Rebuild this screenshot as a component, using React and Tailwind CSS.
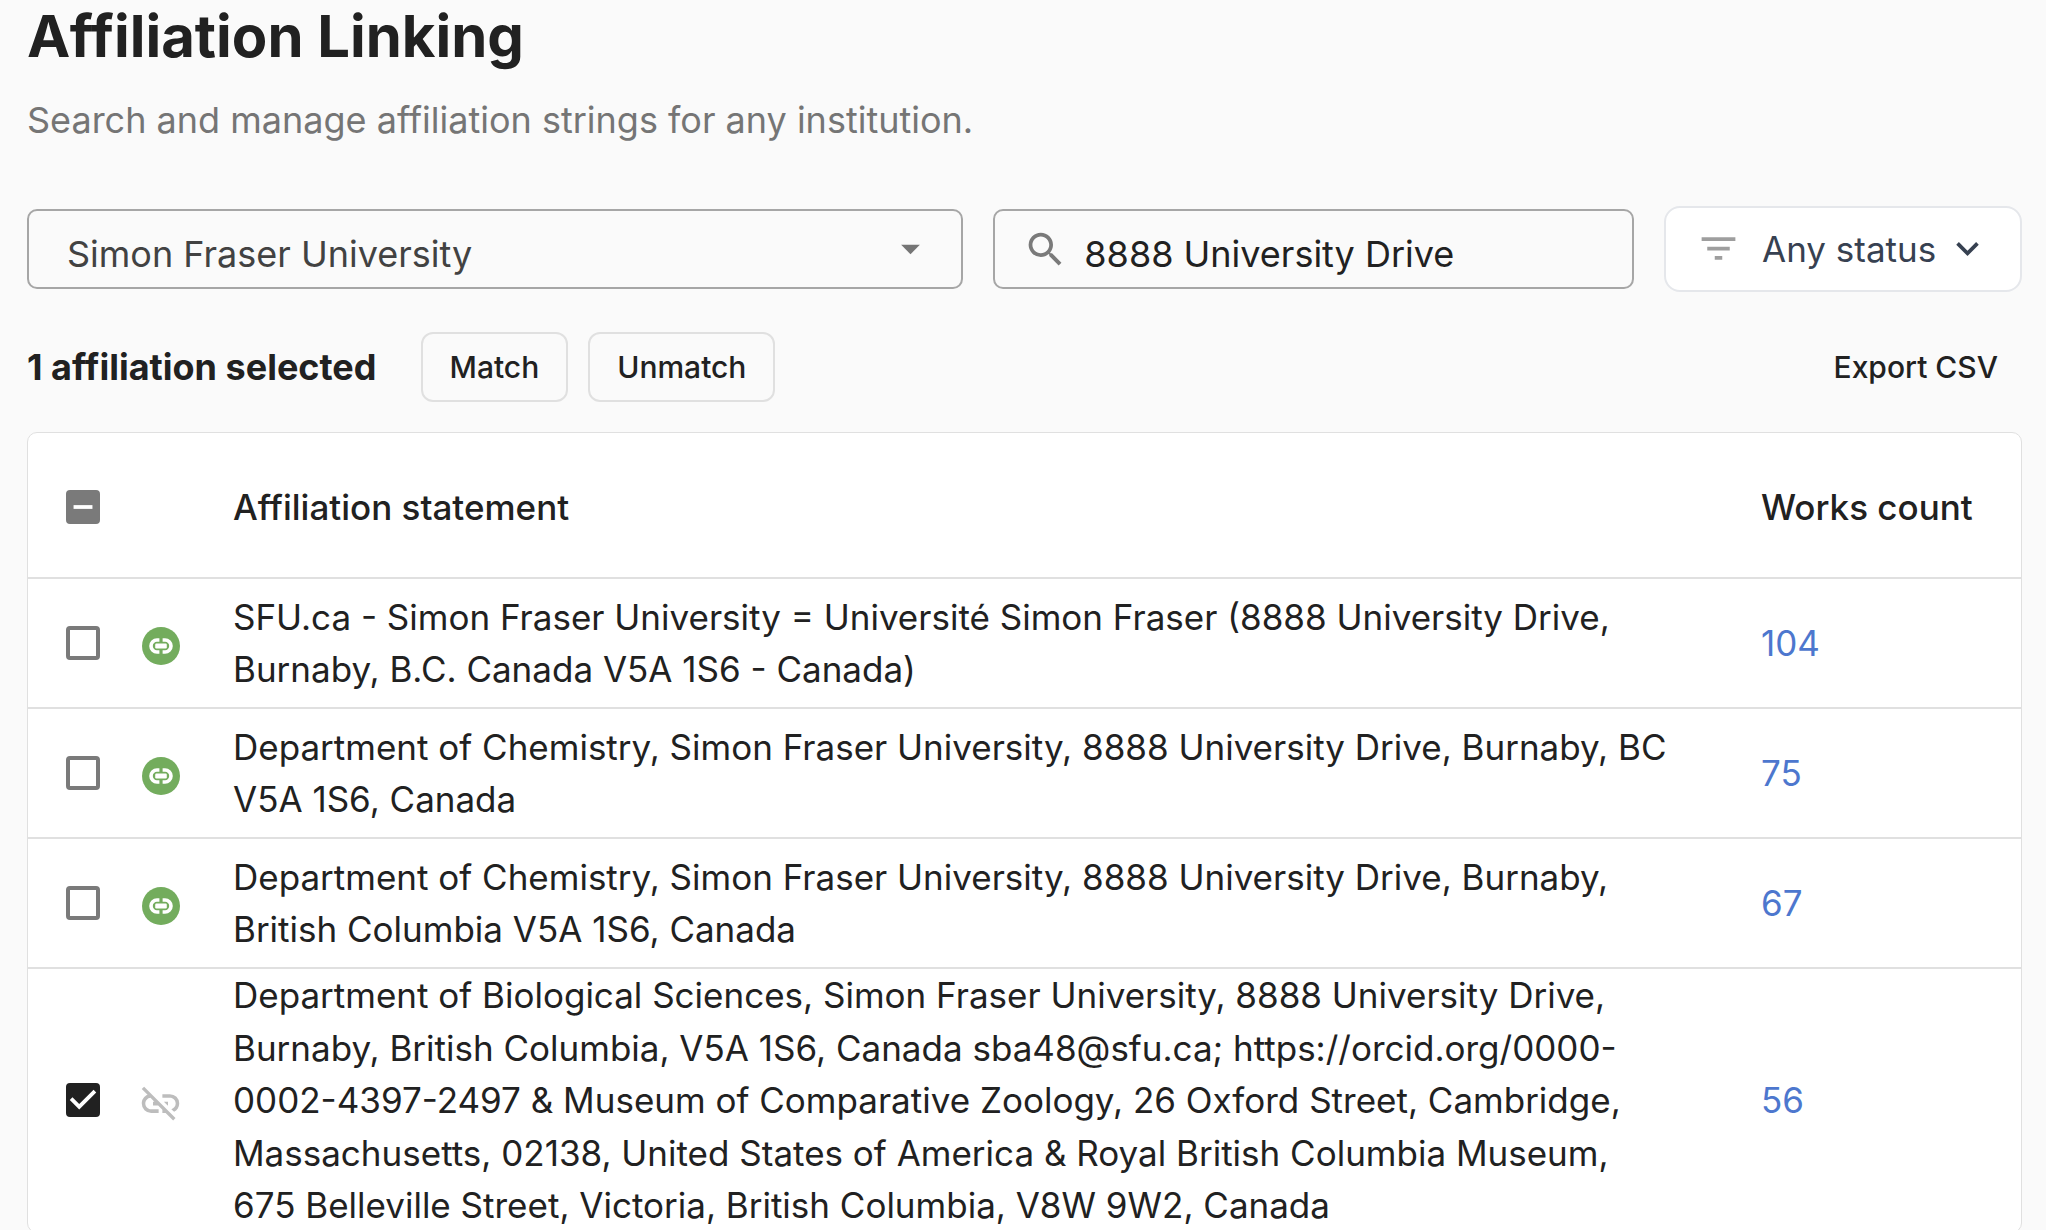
import { useEffect, useRef, useState } from 'react';

const ROWS = [
  {
    id: 1,
    linked: true,
    count: 104,
    text: 'SFU.ca - Simon Fraser University = Université Simon Fraser (8888 University Drive, Burnaby, B.C. Canada V5A 1S6 - Canada)',
  },
  {
    id: 2,
    linked: true,
    count: 75,
    text: 'Department of Chemistry, Simon Fraser University, 8888 University Drive, Burnaby, BC V5A 1S6, Canada',
  },
  {
    id: 3,
    linked: true,
    count: 67,
    text: 'Department of Chemistry, Simon Fraser University, 8888 University Drive, Burnaby, British Columbia V5A 1S6, Canada',
  },
  {
    id: 4,
    linked: false,
    count: 56,
    text: 'Department of Biological Sciences, Simon Fraser University, 8888 University Drive, Burnaby, British Columbia, V5A 1S6, Canada sba48@sfu.ca; https://orcid.org/0000-0002-4397-2497 & Museum of Comparative Zoology, 26 Oxford Street, Cambridge, Massachusetts, 02138, United States of America & Royal British Columbia Museum, 675 Belleville Street, Victoria, British Columbia, V8W 9W2, Canada',
  },
];

const ICONS = {
  menuDown: 'M7,10L12,15L17,10H7Z',
  chevronDown: 'M7.41,8.58L12,13.17L16.59,8.58L18,10L12,16L6,10L7.41,8.58Z',
  filter: 'M6,13H18V11H6M3,6V8H21V6M10,18H14V16H10V18Z',
  magnify:
    'M9.5,3A6.5,6.5 0 0,1 16,9.5C16,11.11 15.41,12.59 14.44,13.73L14.71,14H15.5L20.5,19L19,20.5L14,15.5V14.71L13.73,14.44C12.59,15.41 11.11,16 9.5,16A6.5,6.5 0 0,1 3,9.5A6.5,6.5 0 0,1 9.5,3M9.5,5C7,5 5,7 5,9.5C5,12 7,14 9.5,14C12,14 14,12 14,9.5C14,7 12,5 9.5,5Z',
  linkOff:
    'M17,7H13V8.9H17C18.71,8.9 20.1,10.29 20.1,12C20.1,13.43 19.12,14.63 17.79,15L19.25,16.44C20.88,15.61 22,13.95 22,12A5,5 0 0,0 17,7M16,11H13.81L15.81,13H16V11M2,4.27L5.11,7.38C3.29,8.12 2,9.91 2,12A5,5 0 0,0 7,17H11V15.1H7C5.29,15.1 3.9,13.71 3.9,12C3.9,10.41 5.11,9.1 6.66,8.93L8.73,11H8V13H10.73L13,15.27V17H14.73L18.74,21L20,19.74L3.27,3L2,4.27Z',
};

function Icon({ name, className }) {
  return (
    <svg viewBox="0 0 24 24" fill="currentColor" aria-hidden="true" className={`size-[45px] ${className}`}>
      <path d={ICONS[name]} />
    </svg>
  );
}

function LinkedIcon() {
  return (
    <svg viewBox="0 0 38 38" aria-hidden="true" className="size-[38px]">
      <circle cx="19" cy="19" r="19" fill="#73ac5d" />
      <path
        d="M17.4 13H15a6 6 0 0 0 0 12H17.4M20.6 13H23a6 6 0 0 1 0 12H20.6"
        fill="none"
        stroke="#fff"
        strokeWidth="3.6"
      />
      <rect x="13.2" y="16.6" width="11.6" height="4.8" rx="1.2" fill="#fff" />
    </svg>
  );
}

function Checkbox({ label, checked, indeterminate = false, onChange }) {
  const ref = useRef(null);

  useEffect(() => {
    ref.current.indeterminate = indeterminate;
  }, [indeterminate]);

  return (
    <label className="relative block size-[34px]">
      <input
        ref={ref}
        type="checkbox"
        aria-label={label}
        checked={checked}
        onChange={onChange}
        className="block size-[34px] appearance-none rounded-[4px] border-4 border-[#7a7a7a] checked:border-[#212121] checked:bg-[#212121] indeterminate:border-[#7a7a7a] indeterminate:bg-[#7a7a7a]"
      />
      {(checked || indeterminate) && (
        <svg viewBox="3 3 18 18" className="pointer-events-none absolute inset-0 size-[34px]" fill="#fff">
          {indeterminate ? (
            <path d="M7,11H17V13H7Z" />
          ) : (
            <path d="M10,17L5,12L6.41,10.58L10,14.17L17.59,6.58L19,8L10,17Z" />
          )}
        </svg>
      )}
    </label>
  );
}

export default function App() {
  const [selected, setSelected] = useState([4]);
  const [query, setQuery] = useState('8888 University Drive');

  const toggle = (id) => {
    setSelected(selected.includes(id) ? selected.filter((s) => s !== id) : [...selected, id]);
  };

  const allSelected = selected.length === ROWS.length;

  const toggleAll = () => {
    setSelected(allSelected ? [] : ROWS.map((row) => row.id));
  };

  return (
    <div className="min-h-screen bg-[#fafafa] pr-6 pl-[27px] font-['Inter',sans-serif] text-[35px] leading-[52px] text-[#212121]">
      <h1 className="text-[58px] leading-[72px] font-bold">Affiliation Linking</h1>
      <p className="mt-[22px] text-[36px] leading-[52px] text-[#757575]">
        Search and manage affiliation strings for any institution.
      </p>

      <div className="mt-[60px] grid grid-cols-[19fr_13fr_358px] items-center gap-[30px]">
        <div className="relative">
          <select
            aria-label="Institution"
            className="h-20 w-full appearance-none rounded-[10px] border-2 border-[#a6a6a6] pt-[10px] pl-[38px] text-[36px] text-[#424242]"
          >
            <option>Simon Fraser University</option>
          </select>
          <Icon name="menuDown" className="pointer-events-none absolute top-[17px] right-[30px] text-[#757575]" />
        </div>

        <label className="flex h-20 items-center rounded-[10px] border-2 border-[#a6a6a6] pl-7">
          <Icon name="magnify" className="shrink-0 text-[#7a7a7a]" />
          <input
            type="text"
            aria-label="Search affiliations"
            value={query}
            onChange={(e) => setQuery(e.target.value)}
            className="ml-4 h-full w-full min-w-0 pt-[10px] text-[36px] outline-none"
          />
        </label>

        <div className="relative text-[#374151]">
          <Icon name="filter" className="pointer-events-none absolute top-5 left-8 text-[#9e9e9e]" />
          <select
            aria-label="Status"
            className="h-[86px] w-full appearance-none rounded-2xl border-2 border-[#e5e7eb] bg-white pl-24"
          >
            <option>Any status</option>
          </select>
          <Icon name="chevronDown" className="pointer-events-none absolute top-5 right-8" />
        </div>
      </div>

      <div className="mt-10 flex items-center">
        <span className="mr-11 text-[36px] font-bold">{selected.length} affiliation selected</span>
        <button className="mr-5 h-[70px] rounded-xl border-2 border-[#e0e0e0] px-[27px] text-[30px] font-medium">
          Match
        </button>
        <button className="h-[70px] rounded-xl border-2 border-[#e0e0e0] px-[27px] text-[30px] font-medium">
          Unmatch
        </button>
        <button className="mr-6 ml-auto text-[30px] font-medium">Export CSV</button>
      </div>

      <div className="mt-[30px] rounded-[10px] border border-[#e0e0e0] bg-white">
        <table className="w-full table-fixed text-left">
          <thead>
            <tr className="h-[145px] border-b-2 border-[#e0e0e0]">
              <th className="w-[114px] pt-1 pl-[38px]">
                <Checkbox
                  label="Select all"
                  checked={allSelected}
                  indeterminate={selected.length > 0 && !allSelected}
                  onChange={toggleAll}
                />
              </th>
              <th className="w-[91px]" aria-label="Status" />
              <th className="pt-1 font-medium">Affiliation statement</th>
              <th className="w-[260px] pt-1 font-medium">Works count</th>
            </tr>
          </thead>
          <tbody>
            {ROWS.map((row) => (
              <tr key={row.id} className="h-[130px] border-b-2 border-[#e0e0e0] leading-normal last:border-b-0">
                <td className="pl-[38px]">
                  <Checkbox
                    label={`Select affiliation ${row.id}`}
                    checked={selected.includes(row.id)}
                    onChange={() => toggle(row.id)}
                  />
                </td>
                <td className="pt-[6px]">
                  {row.linked ? <LinkedIcon /> : <Icon name="linkOff" className="-ml-1 text-[#bdbdbd]" />}
                </td>
                <td className="pr-[90px]">{row.text}</td>
                <td>
                  <a href="#works" className="text-[#4d77ce]">
                    {row.count}
                  </a>
                </td>
              </tr>
            ))}
          </tbody>
        </table>
      </div>
    </div>
  );
}
